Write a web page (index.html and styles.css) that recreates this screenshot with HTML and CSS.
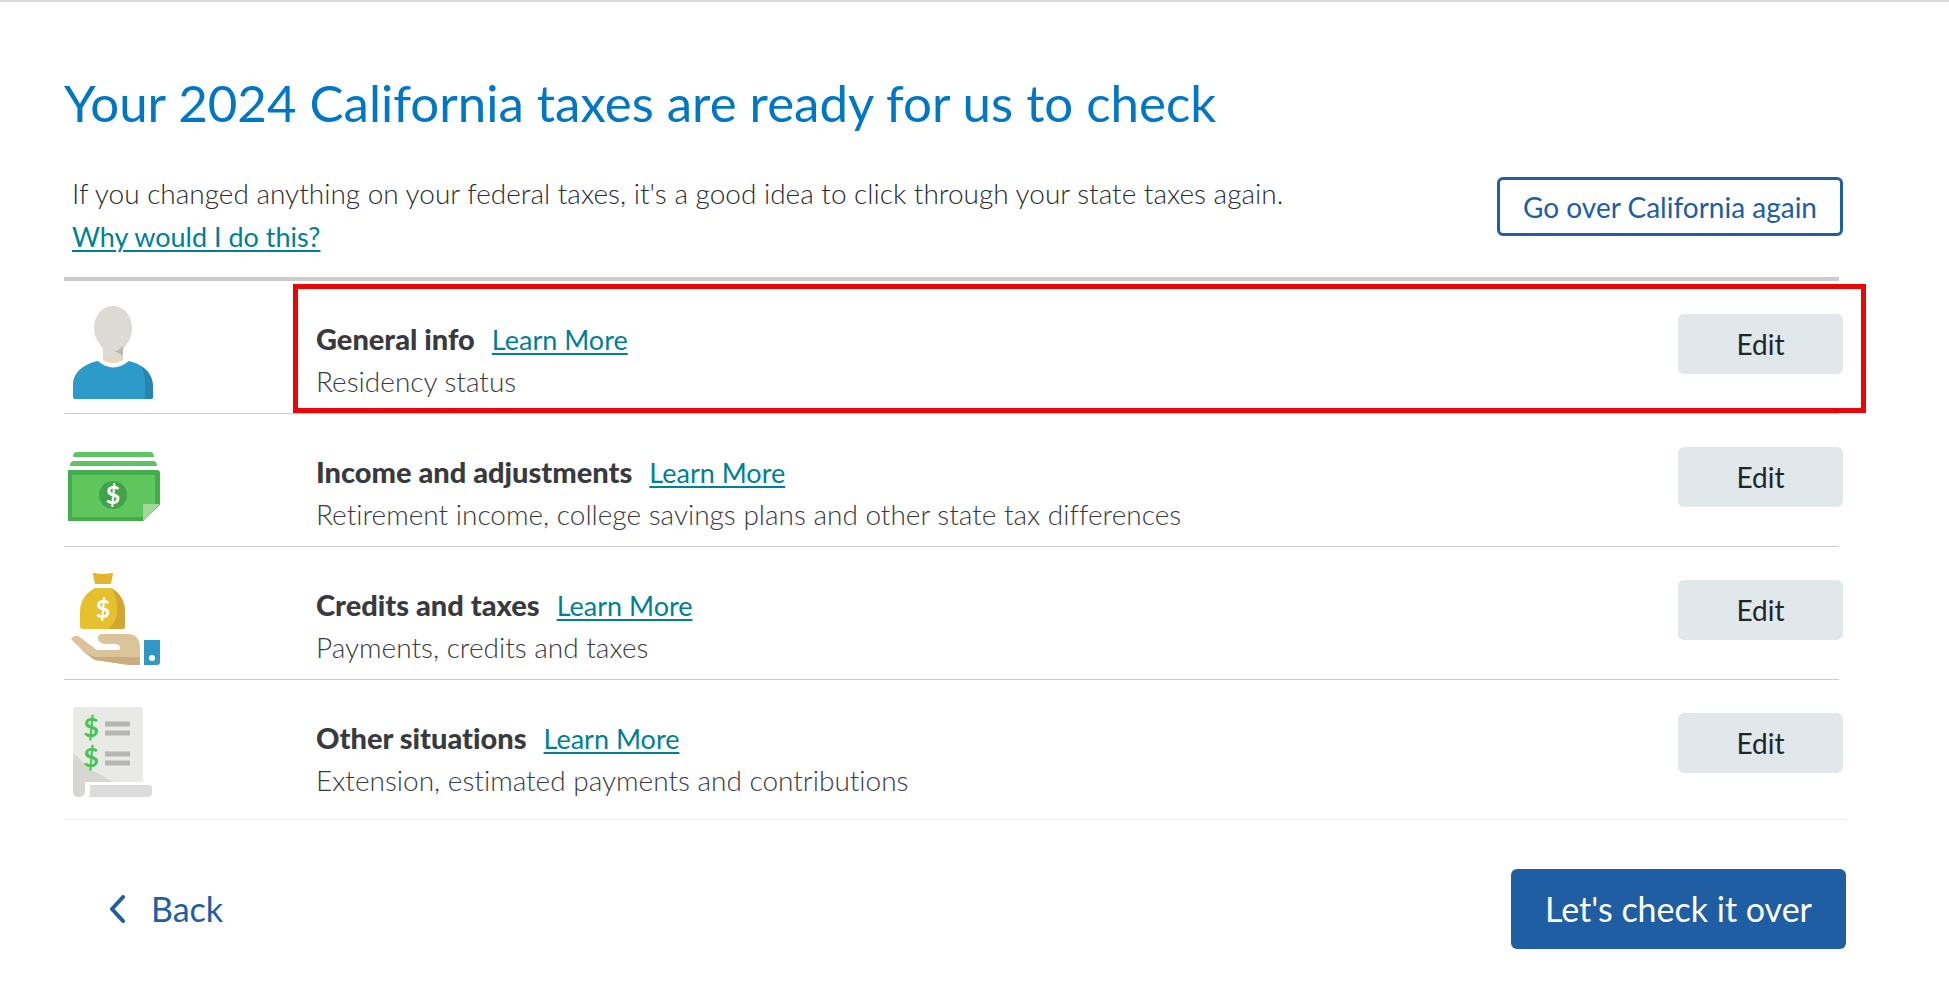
FILE: index.html
```html
<!DOCTYPE html>
<html lang="en">
<head>
<meta charset="utf-8">
<title>California taxes</title>
<link rel="stylesheet" href="styles.css">
</head>
<body>
<main class="page">
  <h1 class="title">Your 2024 California taxes are ready for us to check</h1>
  <section class="intro">
    <div class="intro-text">
      <p class="intro-line">If you changed anything on your federal taxes, it's a good idea to click through your state taxes again.</p>
      <p class="intro-help"><a class="link" href="#">Why would I do this?</a></p>
    </div>
    <button class="btn btn-outline" type="button">Go over California again</button>
  </section>
  <ul class="topics">
    <li class="topic topic-marked">
      <svg class="icon" viewBox="0 0 100 100" aria-hidden="true">
        <path d="M5 94V80C5 67 16 59 30 56Q45 69 61 56C74 59 85 68 85 82V92Q85 94 83 94H7Q5 94 5 92Z" fill="#2c9bc9"/>
        <path d="M73 61C80 65 85 72 85 82V92Q85 94 83 94H77V79C77 72 76 66 73 61Z" fill="#2684b0"/>
        <path d="M45 1C34 1 26 11 26 23C26 33 31 38 35 44V55Q45 61 55 55V44C60 38 64 33 64 23C64 11 56 1 45 1Z" fill="#dcdad5"/>
        <path d="M35 51V55Q45 61 55 55V51Q45 54 35 51Z" fill="#e4d8c2"/>
        <path d="M46 46Q51 46 55 41V51Q52 48 46 46Z" fill="#b8b9ae"/>
      </svg>
      <div class="topic-text">
        <h2 class="topic-head"><span>General info</span><a class="link" href="#">Learn More</a></h2>
        <p class="topic-sub">Residency status</p>
      </div>
      <button class="btn btn-edit" type="button" aria-label="Edit General info">Edit</button>
      <span class="marker"></span>
    </li>
    <li class="topic">
      <svg class="icon" viewBox="0 0 100 100" aria-hidden="true">
        <path d="M5 19Q5 14 9 14H82Q86 14 86 19Z" fill="#5cc463"/>
        <path d="M2 28Q2 23 6 23H85Q89 23 89 28Z" fill="#5cc463"/>
        <path d="M1 32H89Q92 32 92 35V67L75 83H1Q-1 83 -1 81V35Q-1 32 1 32Z" fill="#42ad4a"/>
        <path d="M4 37H87V67H75V79H4Z" fill="#5fc65e"/>
        <circle cx="45" cy="57" r="14" fill="#42a349"/>
        <path d="M75 66H92L75 83Z" fill="#9ed99a"/>
        <text class="dollar" x="45" y="66" fill="#fff">$</text>
      </svg>
      <div class="topic-text">
        <h2 class="topic-head"><span>Income and adjustments</span><a class="link" href="#">Learn More</a></h2>
        <p class="topic-sub">Retirement income, college savings plans and other state tax differences</p>
      </div>
      <button class="btn btn-edit" type="button" aria-label="Edit Income and adjustments">Edit</button>
    </li>
    <li class="topic">
      <svg class="icon" viewBox="0 0 100 100" aria-hidden="true">
        <path d="M25 3Q25 1 27 2Q35 4 43 2Q45 1 45 3L43 13H27Z" fill="#e1b62e"/>
        <path d="M27 17H43Q57 25 57 41V55Q57 58 54 58H15Q12 58 12 55V41Q12 25 27 17Z" fill="#e5c12f"/>
        <path d="M43 17Q57 25 57 41V55Q57 58 54 58H40Q50 51 49 37Q49 25 43 17Z" fill="#d2a632"/>
        <text class="dollar" x="35" y="47" fill="#fff">$</text>
        <path d="M3 68Q7 62 13 67L29 79H49Q53 79 52 76Q51 73 46 73H37Q30 73 30 66Q30 63 34 63H62Q72 65 72 76V94H61L27 89Q12 78 3 68Z" fill="#dcc49a"/>
        <path d="M12 78Q19 83 27 86L72 86V94H61L27 89Q22 86 12 78Z" fill="#c9ad80"/>
        <path d="M76 69H92V91Q92 94 89 94H76Z" fill="#3297c5"/>
        <circle cx="84" cy="87" r="3" fill="#fff"/>
      </svg>
      <div class="topic-text">
        <h2 class="topic-head"><span>Credits and taxes</span><a class="link" href="#">Learn More</a></h2>
        <p class="topic-sub">Payments, credits and taxes</p>
      </div>
      <button class="btn btn-edit" type="button" aria-label="Edit Credits and taxes">Edit</button>
    </li>
    <li class="topic">
      <svg class="icon" viewBox="0 0 100 100" aria-hidden="true">
        <path d="M8 3H72Q75 3 75 6V78H17V86Q17 93 11 93Q5 93 5 87V6Q5 3 8 3Z" fill="#e9e9e6"/>
        <path d="M5 49L24 66L45 78H17V86Q17 93 11 93Q5 93 5 87Z" fill="#d6d6d3"/>
        <path d="M22 81H81Q84 81 84 84V89Q84 93 79 93H21Q22 91 22 88Z" fill="#dcdcdd"/>
        <path d="M37 20H62M37 29H62M37 50H62M37 59H62" fill="none" stroke="#b5b5b1" stroke-width="5"/>
        <text class="dollar dollar-tall" x="23" y="33" fill="#45c556">$</text>
        <text class="dollar dollar-tall" x="23" y="63" fill="#45c556">$</text>
      </svg>
      <div class="topic-text">
        <h2 class="topic-head"><span>Other situations</span><a class="link" href="#">Learn More</a></h2>
        <p class="topic-sub">Extension, estimated payments and contributions</p>
      </div>
      <button class="btn btn-edit" type="button" aria-label="Edit Other situations">Edit</button>
    </li>
  </ul>
  <footer class="actions">
    <button class="btn btn-back" type="button">
      <svg class="chevron" viewBox="0 0 16 28" aria-hidden="true"><path d="M14 2L3 14L14 26"/></svg>
      Back
    </button>
    <button class="btn btn-primary" type="button">Let's check it over</button>
  </footer>
</main>
</body>
</html>
```
FILE: styles.css
```css
* { box-sizing: border-box; }

body {
  margin: 0;
  background: #fff;
  color: #2b2c2f;
  font-family: Lato, "Open Sans", sans-serif;
  font-size: 28px;
  font-variant-ligatures: none;
  line-height: 42px;
}

.page {
  border-top: 2px solid #d8d8d8;
  padding: 70px 103px 48px 64px;
}

h1, h2, p, ul { margin: 0; padding: 0; }

.title {
  color: #0077c5;
  font-size: 51px;
  font-weight: 400;
  line-height: 62px;
}

.intro {
  display: flex;
  justify-content: space-between;
  align-items: flex-start;
  padding: 38px 3px 0 8px;
}

.intro-line { font-weight: 300; }

.intro-help { padding-top: 1px; }

.link {
  color: #008094;
  font-size: 27px;
  font-weight: 400;
  line-height: 1;
  text-decoration: underline;
  text-decoration-thickness: 2px;
  text-underline-offset: 3px;
}

.btn {
  border: 0;
  border-radius: 6px;
  font: inherit;
  cursor: pointer;
}

.btn-outline {
  margin-top: 5px;
  height: 59px;
  padding: 0 23px;
  border: 3px solid #205ea3;
  background: #fff;
  color: #205ea3;
}

.topics {
  list-style: none;
  margin: 20px 7px 0 0;
  border-top: 4px solid #ccc;
}

.topic {
  position: relative;
  display: flex;
  align-items: flex-start;
  min-height: 133px;
  padding: 24px 0 0 4px;
  border-bottom: 1px solid #ccc;
}

.topic:last-child {
  min-height: 140px;
  margin-right: -7px;
  padding-right: 7px;
  border-color: #ebebeb;
}

.icon {
  flex: none;
  width: 100px;
  height: 100px;
}

.dollar {
  font: 700 25px Lato, sans-serif;
  text-anchor: middle;
}

.dollar-tall { font-size: 27px; }

.topic-text {
  flex: 1;
  margin-left: 148px;
  padding-top: 13px;
}

.topic-head {
  display: flex;
  align-items: baseline;
  gap: 17px;
  color: #393a3d;
  font-size: 29px;
  font-weight: 900;
}

.topic-sub {
  color: #393a3d;
  font-weight: 300;
}

.btn-edit {
  width: 165px;
  height: 60px;
  margin: 9px -4px 0 0;
  background: #e0e8eb;
  color: #21262a;
}

.marker {
  position: absolute;
  inset: 3px -27px 0 229px;
  border: 5px solid #ea0606;
  pointer-events: none;
}

.actions {
  display: flex;
  justify-content: space-between;
  align-items: center;
  padding: 49px 0 0 45px;
}

.btn-back {
  display: flex;
  align-items: center;
  gap: 26px;
  padding: 0;
  background: none;
  color: #205ea3;
  font-size: 34px;
}

.chevron {
  width: 16px;
  height: 28px;
  fill: none;
  stroke: #205ea3;
  stroke-width: 4;
  stroke-linecap: round;
  stroke-linejoin: round;
}

.btn-primary {
  height: 80px;
  padding: 0 34px;
  background: #205ea3;
  color: #fff;
  font-size: 34px;
}
```
